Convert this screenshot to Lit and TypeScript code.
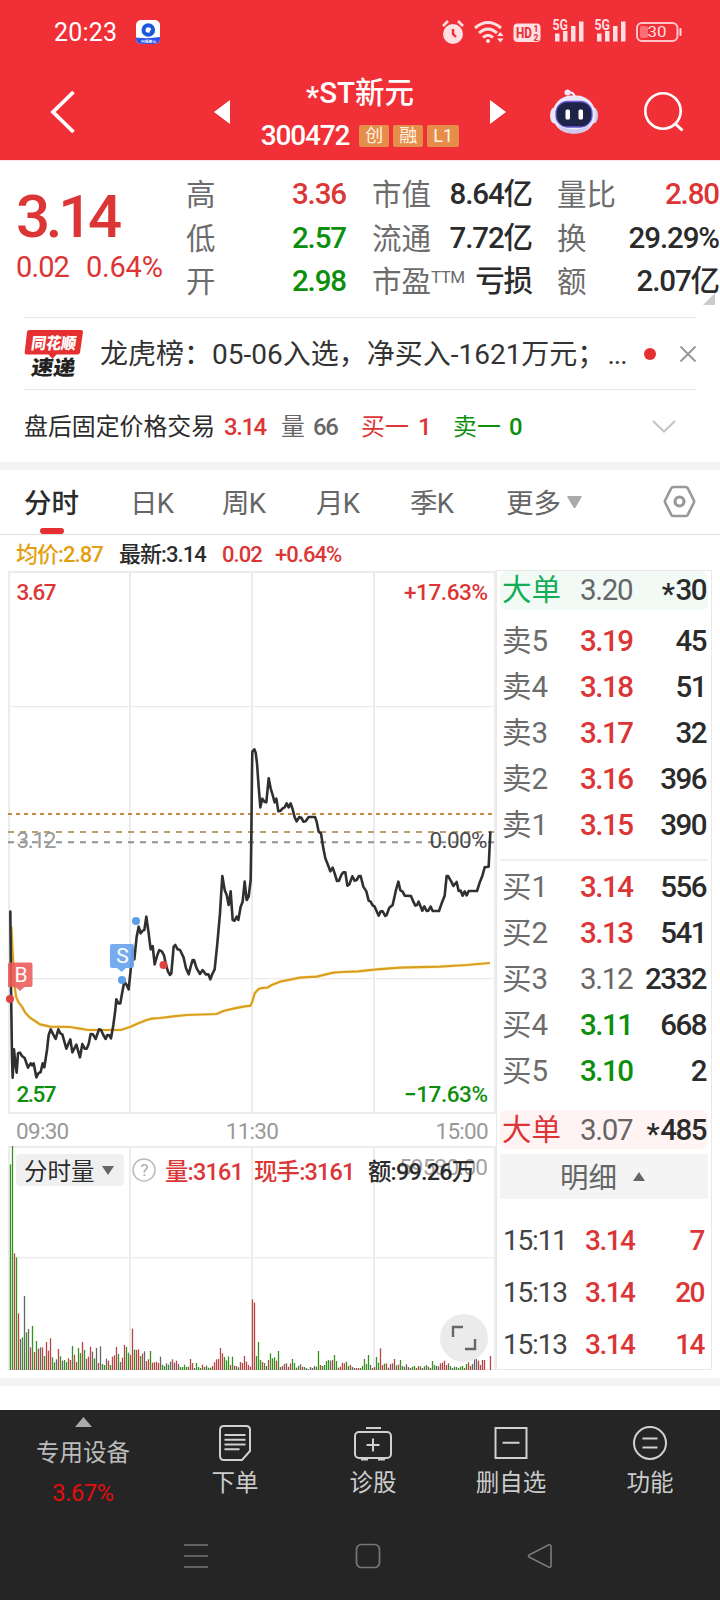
import { LitElement, html, svg, css } from "lit";
import { customElement } from "lit/decorators.js";

type Tone = "up" | "down" | "flat" | "ink";

// Minute price series, in thirds of a pixel measured from the top of the plot.
const PRICE =
  "31,575 33,800 36,1010 38,1073 42,988 46,1030 50,1058 54,1000 60,998 66,1008 74,1014 84,1043 92,1030 97,1036 101,1030 109,1072 115,1060 122,1056 128,1030 133,1042 141,990 146,945 152,928 160,944 167,957 175,928 181,940 187,943 199,986 211,958 217,997 229,974 240,1012 247,972 254,986 260,986 266,972 272,942 279,943 287,957 297,928 303,930 310,945 317,957 322,945 328,946 333,955 340,915 346,870 349,838 355,850 361,850 367,815 373,785 380,795 386,808 392,750 398,690 403,718 410,650 416,620 422,640 428,632 433,630 439,590 446,640 452,688 458,678 464,733 472,705 478,690 486,695 492,706 498,735 504,755 510,765 514,760 521,680 526,675 533,688 540,690 551,713 558,745 566,763 572,740 578,720 582,720 590,745 600,762 608,750 617,763 625,763 631,778 637,762 644,748 652,670 660,580 663,530 667,468 674,510 680,525 686,555 692,514 698,600 704,602 710,590 715,600 722,560 728,545 734,485 740,540 746,530 752,480 754,350 756,150 757,95 763,88 767,98 771,130 776,200 781,262 787,236 794,246 799,247 806,175 812,205 818,225 824,247 829,236 835,274 842,272 848,265 854,262 860,250 866,262 872,250 878,268 884,292 890,304 898,291 904,293 910,305 917,304 926,291 945,291 950,305 956,335 963,340 970,385 976,415 984,435 991,454 998,443 1004,460 1011,483 1017,482 1025,463 1030,457 1036,457 1042,497 1048,493 1057,469 1064,482 1070,480 1077,468 1082,468 1090,500 1099,514 1106,542 1112,545 1118,556 1124,560 1136,587 1142,574 1148,574 1156,588 1160,585 1168,563 1178,555 1188,510 1195,485 1201,511 1208,515 1214,527 1233,528 1240,545 1246,557 1251,555 1256,545 1267,572 1273,559 1280,573 1285,572 1292,560 1298,573 1317,573 1325,550 1334,527 1340,468 1344,468 1354,485 1360,498 1370,486 1376,513 1382,512 1388,527 1394,514 1400,526 1406,513 1431,513 1440,485 1447,468 1454,442 1466,440 1471,338";

const AVERAGE =
  "34,620 37,680 43,790 48,830 56,848 66,860 76,878 90,893 105,903 120,913 150,920 210,921 240,926 265,930 362,930 390,921 415,910 440,900 455,896 480,894 520,889 560,885 650,882 670,873 700,866 730,860 752,857 756,847 764,820 775,808 785,804 802,803 815,795 840,785 900,773 950,770 1000,758 1025,756 1075,754 1130,748 1200,743 1320,740 1400,735 1470,729";

// One token per minute: bar top (thirds of a pixel) and its colour key.
const VOLUME =
  "163g 108g 430r 442g 610r 687k 682g 558k 667g 657k 712r 648g 726r 693g 716r 712k 712r 738g 696r 722r 685r 742g 757g 748k 717r 739g 752k 750g 756g 745r 750r 708g 734r 756r 714g 729g 696r 720g 746k 740r 710r 725k 745g 714k 759r 709k 762g 765g 746k 752r 765g 740r 736r 711r 732g 756k 743r 705r 711g 728g 735r 656r 719g 720r 718r 738g 731r 724k 753r 748r 723g 758r 757r 755r 759r 740k 764g 768g 760k 764g 755k 748r 758k 752r 762k 771g 771g 764g 771g 770r 747r 759r 774k 759g 771g 774g 764r 771g 767k 773g 773g 768r 757r 748r 747r 714r 730r 741g 751g 739g 765r 740g 767k 768r 772g 756r 759r 738r 755r 765r 770r 568r 578r 738g 696g 750g 756r 759g 768k 750r 730g 745g 742g 752r 723g 771k 768r 762r 760k 770r 760r 747g 759g 773r 768g 763k 770r 771g 774k 777k 771k 774k 768k 770g 723g 765r 768g 765g 753g 750g 752k 750r 735g 753g 773r 770r 758r 760r 755g 768g 765r 771k 774k 774r 774r 774g 768g 747g 762g 735g 765k 774k 771r 741g 758g 715r 765r 761g 760r 773k 762r 760k 747r 766g 764r 750g 768k 770g 763k 771r 774k 770g 768g 774r 768r 769g 774k 769k 765g 770r 774g 753g 765g 768k 769k 760r 758r 752r 765r 760k 768g 774g 770k 771g 774g 770g 768g 774r 762g 757r 768r 762k 747k 747k 752r 765r 750r 750r 780k 780k 738r";

const VOL_COLOR: Record<string, string> = { g: "#369220", r: "#b84545", k: "#666" };

const base = css`
  :host {
    display: block;
    box-sizing: border-box;
  }
  * {
    box-sizing: border-box;
  }
  svg {
    display: block;
    flex: none;
  }
  .up {
    color: #dc3535;
  }
  .down {
    color: #0c8f0c;
  }
  .flat {
    color: #666;
  }
  .ink {
    color: #2b2b2b;
  }
`;

@customElement("status-bar")
class StatusBar extends LitElement {
  static styles = [
    base,
    css`
      :host {
        height: 64px;
        padding: 0 38px 0 54px;
        display: flex;
        align-items: center;
        color: #fff;
      }
      .clock {
        font-size: 25px;
        line-height: 30px;
        padding-top: 2px;
        letter-spacing: 0.2px;
        width: 82px;
      }
      .signals {
        margin-left: auto;
      }
    `,
  ];
  render() {
    const bars = (x: number) => svg`
      <text x="${x - 2.5}" y="14.500" font-size="14" font-weight="700" textLength="15.500" lengthAdjust="spacingAndGlyphs">5G</text>
      <rect x="${x}" y="18.500" width="4.500" height="8"/><rect x="${x + 8}" y="16" width="4.500" height="10.500"/>
      <rect x="${x + 16}" y="11" width="4.500" height="15.500"/><rect x="${x + 24}" y="6.500" width="4.500" height="20"/>`;
    return html`
      <span class="clock">20:23</span>
      <svg width="24" height="24" viewBox="0 0 24 24">
        <rect width="24" height="24" rx="5" fill="#fff" />
        <path d="M0 17.500Q12 19 24 17V19a5 5 0 0 1-5 5H5a5 5 0 0 1-5-5Z" fill="#2b51ea" />
        <circle cx="12.300" cy="10" r="4.800" fill="none" stroke="#1c57dc" stroke-width="4" />
        <circle cx="15" cy="11.500" r="1.300" fill="#1c57dc" />
        <text x="5" y="22.800" font-size="3.800" font-weight="700" fill="#fff" font-family="Noto Sans CJK SC">兴低放心</text>
      </svg>
      <svg class="signals" width="240" height="34" viewBox="0 0 240 34" fill="#ffdfe1" font-family="Roboto">
        <circle cx="11" cy="19" r="10" />
        <path d="M1 11l5-5M21 11l-5-5" stroke="#ffdfe1" stroke-width="2.600" />
        <path d="M11 14v5l3 3" stroke="#f12f37" stroke-width="2.400" fill="none" />
        <g fill="none" stroke="#ffdfe1" stroke-width="3">
          <path d="M33 13q13-11 26 0M37 18q9-8 18 0M41 22.500q5-4.500 10 0" />
        </g>
        <circle cx="46" cy="26" r="2" />
        <path d="M55 21l3.300-4 3.300 4zM55 23.500l3.300 4 3.300-4z" />
        <rect x="71.500" y="8.500" width="27" height="18.500" rx="4" />
        <text x="74" y="23.300" font-size="15.500" font-weight="800" fill="#e8323a" textLength="16" lengthAdjust="spacingAndGlyphs">HD</text>
        <text x="91.500" y="16.500" font-size="8.500" font-weight="800" fill="#e8323a">1</text>
        <text x="91.500" y="25.500" font-size="8.500" font-weight="800" fill="#e8323a">2</text>
        ${bars(113)} ${bars(155)}
        <rect x="195" y="8" width="40.500" height="18" rx="5" fill="none" stroke="#ffc5c8" stroke-width="2" />
        <rect x="198" y="11" width="8" height="12" rx="2" fill="#fb6e73" />
        <rect x="237.500" y="13" width="2" height="8" rx="1" />
        <text x="205.500" y="22.200" font-size="15" textLength="19" lengthAdjust="spacingAndGlyphs">30</text>
      </svg>
    `;
  }
}

@customElement("stock-title")
class StockTitle extends LitElement {
  static styles = [
    base,
    css`
      :host {
        height: 96px;
        display: grid;
        grid-template-columns: 214px 16px 260px 16px 44px 48px 46px 40px 36px;
        align-items: center;
        color: #fff;
      }
      .back {
        padding-left: 50px;
      }
      .name {
        display: flex;
        flex-direction: column;
        align-items: center;
        padding-top: 5px;
      }
      .title {
        font-size: 29.5px;
        line-height: 36px;
        font-weight: 500;
        height: 42px;
      }
      .star {
        position: relative;
        top: 4px;
      }
      .code {
        display: flex;
        align-items: center;
        gap: 4px;
        font-weight: 500;
        font-size: 28px;
        line-height: 36px;
      }
      .num {
        letter-spacing: -1.2px;
        margin-right: 6px;
        padding-top: 1px;
      }
      .tag {
        width: 30px;
        height: 22px;
        background: #e58e4a;
        border-radius: 2px;
        font-size: 18px;
        line-height: 22px;
        font-weight: 400;
        text-align: center;
        color: #fff3e6;
      }
      .wide {
        width: 32px;
      }
    `,
  ];
  render() {
    return html`
      <div class="back">
        <svg width="26" height="44" viewBox="0 0 26 44">
          <path d="M23.500 2L3 22l20.500 20" fill="none" stroke="#fff" stroke-width="3.800" />
        </svg>
      </div>
      <svg width="16" height="24" viewBox="0 0 16 24"><path d="M16 0v24L0 12z" fill="#fff" /></svg>
      <div class="name">
        <div class="title"><span class="star">*</span>ST新元</div>
        <div class="code">
          <span class="num">300472</span><span class="tag">创</span><span class="tag">融</span
          ><span class="tag wide">L1</span>
        </div>
      </div>
      <svg width="16" height="24" viewBox="0 0 16 24"><path d="M0 0v24l16-12z" fill="#fff" /></svg>
      <span></span>
      <svg width="48" height="46" viewBox="0 0 48 46">
        <path d="M18 3.500q6-1 7 5" fill="none" stroke="#f3e9ff" stroke-width="2.200" />
        <circle cx="17.500" cy="3.500" r="3" fill="#f3e4fb" />
        <ellipse cx="4.500" cy="26.500" rx="4.500" ry="8" fill="#e6e4fb" />
        <ellipse cx="43.500" cy="26.500" rx="4.500" ry="8" fill="#cfcff2" />
        <rect x="2.500" y="6.500" width="43" height="38" rx="19" fill="#ebe7fc" />
        <path d="M7 36q17 9 34 0q-6 8.500-17 8.500T7 36z" fill="#cdc8f0" />
        <rect x="6" y="12.500" width="36" height="25.500" rx="11.500" fill="#1d2447" stroke="#6a5bd8" stroke-width="1.300" />
        <rect x="15.500" y="20.500" width="4.500" height="10" rx="1.500" fill="#fff" />
        <rect x="28.500" y="20.500" width="4.500" height="10" rx="1.500" fill="#fff" />
      </svg>
      <span></span>
      <svg width="40" height="42" viewBox="0 0 40 42">
        <circle cx="19" cy="20" r="17.700" fill="none" stroke="#fff" stroke-width="2.600" />
        <path d="M31 32.500l7.500 7" stroke="#fff" stroke-width="3" />
      </svg>
    `;
  }
}

@customElement("quote-summary")
class QuoteSummary extends LitElement {
  static styles = [
    base,
    css`
      :host {
        height: 157px;
        position: relative;
        display: grid;
        grid-template-columns: 170px 160px 26px 160px 25px 163px;
        padding-left: 16px;
        border-top: 1px solid #ffe3e6;
      }
      .price {
        font-size: 60px;
        line-height: 64px;
        font-weight: 500;
        letter-spacing: -4.3px;
        padding-top: 24px;
      }
      .delta {
        display: flex;
        gap: 17px;
        font-size: 29px;
        line-height: 37px;
        letter-spacing: -0.9px;
      }
      .pct {
        letter-spacing: -0.2px;
      }
      .col {
        padding-top: 12px;
      }
      .cell {
        display: flex;
        justify-content: space-between;
        height: 43.5px;
        line-height: 43.5px;
        font-size: 29.5px;
      }
      .label {
        color: #6c6c6c;
        position: relative;
        top: 1px;
      }
      .value {
        font-weight: 500;
        letter-spacing: -1.1px;
      }
      .last .value {
        margin-right: 1px;
      }
      .sup {
        font-size: 17px;
        position: relative;
        top: -9px;
        letter-spacing: -0.6px;
      }
      .corner {
        position: absolute;
        right: 5px;
        bottom: 12px;
      }
    `,
  ];
  render() {
    const cols: [string, string, Tone, string?][][] = [
      [["高", "3.36", "up"], ["低", "2.57", "down"], ["开", "2.98", "down"]],
      [["市值", "8.64亿", "ink"], ["流通", "7.72亿", "ink"], ["市盈", "亏损", "ink", "TTM"]],
      [["量比", "2.80", "up"], ["换", "29.29%", "ink"], ["额", "2.07亿", "ink"]],
    ];
    return html`
      <div>
        <div class="price up">3.14</div>
        <div class="delta up"><span>0.02</span><span class="pct">0.64%</span></div>
      </div>
      ${cols.map(
        (col, i) => html`
          <div class="col ${i === 2 ? "last" : ""}">
            ${col.map(
              ([l, v, tone, sup]) => html`<div class="cell">
                <span class="label">${l}${sup ? html`<span class="sup">${sup}</span>` : ""}</span>
                <span class="value ${tone}">${v}</span>
              </div>`
            )}
          </div>
          ${i < 2 ? html`<span></span>` : ""}
        `
      )}
      <svg class="corner" width="12" height="12" viewBox="0 0 12 12"><path d="M12 0v12H0z" fill="#ccc" /></svg>
    `;
  }
}

@customElement("news-strip")
class NewsStrip extends LitElement {
  static styles = [
    base,
    css`
      :host {
        padding: 0 24px;
      }
      .msg {
        height: 73px;
        border-top: 1px solid #e8e8e8;
        border-bottom: 1px solid #e8e8e8;
        display: flex;
        align-items: center;
      }
      .text {
        font-size: 28px;
        line-height: 40px;
        color: #333;
        margin-left: 16px;
        width: 544px;
        padding-top: 2px;
        white-space: nowrap;
      }
      .dots {
        letter-spacing: -1px;
        margin-left: 2px;
      }
      .close {
        margin-left: auto;
      }
      .after {
        height: 72px;
        display: flex;
        align-items: center;
        font-size: 23.9px;
        line-height: 32px;
        padding-top: 2px;
      }
      .after .n {
        letter-spacing: -1.4px;
        font-weight: 500;
      }
    `,
  ];
  render() {
    return html`
      <div class="msg">
        <svg width="60" height="50" viewBox="0 0 60 50" font-family="Noto Sans CJK SC" font-weight="900">
          <path d="M5.500 1H57q2 0 2 2l-3 20.500q-.5 2-2.500 2H32.500L28.500 30l-4-4.500H3q-2.500 0-2.300-2.200L3 3q.4-2 2.500-2z" fill="#e52f30" />
          <text transform="translate(6.500 19.500) skewX(-8)" font-size="16" fill="#fff" textLength="45" lengthAdjust="spacingAndGlyphs">同花顺</text>
          <text transform="translate(6.500 46) skewX(-8)" font-size="20.500" fill="#222" textLength="44" lengthAdjust="spacingAndGlyphs">速递</text>
        </svg>
        <span class="text">龙虎榜：05-06入选，净买入-1621万元；<span class="dots">...</span></span>
        <svg width="12" height="12"><circle cx="6" cy="6" r="6" fill="#e52f30" /></svg>
        <svg class="close" width="16" height="16" viewBox="0 0 16 16">
          <path d="M.5.5l15 15M15.500.5l-15 15" stroke="#999" stroke-width="2" />
        </svg>
      </div>
      <div class="after">
        <span class="ink" style="width:200px">盘后固定价格交易</span>
        <span class="n up" style="width:57px">3.14</span>
        <span class="flat" style="width:32px">量</span>
        <span class="n flat" style="width:48px">66</span>
        <span class="up" style="width:57px">买一</span>
        <span class="n up" style="width:35px">1</span>
        <span class="down" style="width:56px">卖一</span>
        <span class="n down">0</span>
        <svg style="margin-left:auto;margin-right:20px" width="24" height="14" viewBox="0 0 24 14">
          <path d="M1 1l11 10.500L23 1" fill="none" stroke="#c4c4c4" stroke-width="2.200" />
        </svg>
      </div>
    `;
  }
}

@customElement("period-tabs")
class PeriodTabs extends LitElement {
  static styles = [
    base,
    css`
      :host {
        height: 73px;
        border-top: 8px solid #f4f4f4;
        border-bottom: 1px solid #e0e0e0;
        padding: 0 24px;
        display: flex;
        font-size: 27.5px;
        line-height: 68px;
        color: #666;
      }
      .tab {
        flex: none;
      }
      .k {
        letter-spacing: -0.8px;
      }
      .on {
        color: #2b2b2b;
        font-weight: 500;
        display: flex;
        flex-direction: column;
      }
      .on::after {
        content: "";
        width: 24px;
        height: 6px;
        border-radius: 3px;
        background: #e52f30;
        margin: -10px 0 0 16px;
      }
      .tri {
        margin-top: 26px;
      }
      .gear {
        margin: 15px 0 0 auto;
      }
    `,
  ];
  render() {
    const tabs: [string, number][] = [["日K", 92], ["周K", 94], ["月K", 94], ["季K", 96]];
    return html`
      <span class="tab on" style="width:106px">分时</span>
      ${tabs.map(([t, w]) => html`<span class="tab k" style="width:${w}px">${t}</span>`)}
      <span class="tab" style="width:61px">更多</span>
      <svg class="tri" width="15" height="12" viewBox="0 0 15 12"><path d="M1 0h13q1 0 .5 1.200L8.500 11.500q-1 1-2 0L.5 1.200Q0 0 1 0z" fill="#aaa" /></svg>
      <svg class="gear" width="33" height="33" viewBox="0 0 33 33" fill="none" stroke="#999" stroke-width="2.600">
        <path d="M10.500 2h12q1.500 0 2.200 1.200l6 11.800q.8 1.500 0 3l-6 11.800q-.7 1.200-2.200 1.200h-12q-1.500 0-2.200-1.200l-6-11.800q-.8-1.500 0-3l6-11.800Q9 2 10.500 2z" />
        <circle cx="16.500" cy="16.500" r="4.500" stroke-width="3.200" />
      </svg>
    `;
  }
}

@customElement("minute-chart")
class MinuteChart extends LitElement {
  static styles = [
    base,
    css`
      :host {
        width: 496px;
      }
      .info {
        display: flex;
        height: 36px;
        padding-left: 16px;
        line-height: 40px;
        font-size: 22px;
        font-weight: 500;
        letter-spacing: -0.95px;
      }
      .info span {
        flex: none;
      }
      .avg {
        color: #e2a010;
      }
      .axis {
        display: flex;
        justify-content: space-between;
        height: 32px;
        padding: 0 8px 0 16px;
        line-height: 34px;
        font-size: 22.500px;
        color: #999;
        letter-spacing: -0.7px;
      }
      .vol {
        position: relative;
      }
      .head {
        position: absolute;
        left: 16px;
        top: 8px;
        height: 32px;
        display: flex;
        align-items: center;
        font-size: 23.4px;
        line-height: 32px;
        font-weight: 500;
        letter-spacing: -0.8px;
        white-space: nowrap;
      }
      .head .t {
        padding-top: 3px;
      }
      .pill {
        width: 108px;
        height: 32px;
        border-radius: 4px;
        background: #f0f0f0;
        display: flex;
        align-items: center;
        justify-content: space-between;
        padding: 0 10px 0 8px;
        margin-right: 8px;
        letter-spacing: 0;
        font-size: 23.500px;
        font-weight: 400;
      }
      .q {
        margin-right: 9px;
      }
      .expand {
        position: absolute;
        left: 440px;
        top: 168px;
      }
    `,
  ];
  render() {
    const grid = (top: number, rows: number[], bottom: number) => svg`
      <g fill="#ececec">
        ${[8, 129, 251, 373, 494].map((x) => svg`<rect x="${x}" y="${top}" width="2" height="${bottom - top}"/>`)}
        ${[top, ...rows, bottom - 2].map((y) => svg`<rect x="8" y="${y}" width="488" height="${y === top || y === bottom - 2 ? 2 : 1.300}"/>`)}
      </g>`;
    return html`
      <div class="info">
        <span class="avg" style="width:103px">均价:2.87</span>
        <span class="ink" style="width:103px">最新:3.14</span>
        <span class="up" style="width:53px">0.02</span>
        <span class="up">+0.64%</span>
      </div>
      <svg width="496" height="543" viewBox="0 571 496 543" font-family="Roboto" font-size="22.500">
        ${grid(571, [706, 978], 1114)}
        <g fill="none" transform="translate(0 720) scale(.33333)">
          <path d="M24 282H1482" stroke="#c58a45" stroke-width="6" stroke-dasharray="12 12" />
          <path d="M24 336H1482" stroke="#b8a070" stroke-width="6" stroke-dasharray="18 18" />
          <path d="M24 367H1482" stroke="#919191" stroke-width="6" stroke-dasharray="18 18" />
          <polyline points=${AVERAGE} stroke="#fff3cf" stroke-width="11" stroke-linejoin="round" />
          <polyline points=${AVERAGE} stroke="#d99e20" stroke-width="6.500" stroke-linejoin="round" />
        </g>
        <text x="16.500" y="848" fill="#999" textLength="40">3.12</text>
        <text x="429.500" y="848" fill="#4a4a4a" textLength="58">0.00%</text>
        <g fill="none" transform="translate(0 720) scale(.33333)">
          <polyline points=${PRICE} stroke="#303030" stroke-width="7.800" stroke-linejoin="round" stroke-linecap="round" />
        </g>
        <g font-weight="500">
          <text x="16.500" y="599.500" fill="#dc3535" textLength="40">3.67</text>
          <text x="404" y="599.500" fill="#dc3535" textLength="84">+17.63%</text>
          <text x="16.500" y="1101.500" fill="#0c8f0c" textLength="40">2.57</text>
          <text x="404" y="1101.500" fill="#0c8f0c" textLength="84">−17.63%</text>
        </g>
        <path d="M10 962.500h20.500q2 0 2 2v20.500q0 2-2 2h-6L20 991l-4.500-4h-7.500v-22.500q0-2 2-2z" fill="#ec5a5a" opacity=".88" />
        <path d="M112 944h20q2 0 2 2v20q0 2-2 2h-6l-4.500 4-4.500-4h-5q-2 0-2-2v-20q0-2 2-2z" fill="#6aa5ee" opacity=".92" />
        <g fill="#fff" font-size="21" text-anchor="middle">
          <text x="21" y="982">B</text>
          <text x="122.500" y="963">S</text>
        </g>
        <circle cx="10" cy="999" r="4" fill="#e04242" />
        <circle cx="163.500" cy="965" r="4" fill="#e04242" />
        <circle cx="122" cy="980" r="4" fill="#5a9fe8" />
        <circle cx="136" cy="921" r="4" fill="#5a9fe8" />
      </svg>
      <div class="axis"><span>09:30</span><span>11:30</span><span>15:00</span></div>
      <div class="vol">
        <svg width="496" height="224" viewBox="0 1146 496 224" font-family="Roboto" font-size="22.500">
          ${grid(1146, [1257], 1371)}
          <text x="399" y="1175" fill="#a3a3a3" textLength="89">59530.00</text>
          ${VOLUME.split(" ").map((t, i) => {
            const top = 1110 + parseInt(t) / 3;
            return svg`<rect x="${9.85 + i * 2}" y="${top}" width="1.300" height="${1370 - top}" fill="${VOL_COLOR[t.slice(-1)]}"/>`;
          })}
        </svg>
        <div class="head">
          <span class="pill ink"><span class="t">分时量</span><svg width="12" height="9" viewBox="0 0 12 9"><path d="M0 0h12L6 9z" fill="#666" /></svg></span>
          <svg class="q" width="24" height="24" viewBox="0 0 24 24">
            <circle cx="12" cy="12" r="11" fill="none" stroke="#bbb" stroke-width="1.500" />
            <text x="12" y="18" text-anchor="middle" font-size="17" font-weight="400" fill="#aaa">?</text>
          </svg>
          <span class="t up" style="width:89px">量:3161</span>
          <span class="t up" style="width:114px">现手:3161</span>
          <span class="t ink">额:99.26万</span>
        </div>
        <svg class="expand" width="48" height="48" viewBox="0 0 48 48">
          <circle cx="24" cy="24" r="24" fill="#ebebeb" />
          <path d="M13 23V13h10M35 25v10H25" fill="none" stroke="#666" stroke-width="2.400" />
        </svg>
      </div>
    `;
  }
}

@customElement("order-book")
class OrderBook extends LitElement {
  static styles = [
    base,
    css`
      :host {
        width: 216px;
        height: 800px;
        margin-top: 35px;
        padding: 0 3px;
        border: 1px solid #e8e8e8;
      }
      .row {
        display: grid;
        grid-template-columns: 78px 60px 1fr;
        padding: 0 2px;
        height: 46px;
        line-height: 46px;
        font-size: 29.500px;
      }
      .big {
        height: 39px;
        line-height: 39px;
        border-radius: 7px;
      }
      .sell {
        background: #f2faf6;
        margin-bottom: 8px;
      }
      .buy {
        background: #fff3f3;
        line-height: 41px;
        margin-top: 16px;
      }
      .green {
        color: #12ad56;
      }
      .row .label.flat {
        color: #6c6c6c;
      }
      .num {
        font-weight: 500;
        letter-spacing: -1.500px;
      }
      .row .num.flat {
        font-weight: 400;
        letter-spacing: -1.300px;
      }
      .qty {
        text-align: right;
      }
      .star {
        position: relative;
        top: 4px;
        margin-right: 2px;
      }
      .rule {
        height: 2px;
        background: #f0f0f0;
        margin: 11px 0 3px;
      }
      .detail {
        height: 45px;
        margin-top: 5px;
        background: #f4f4f4;
        color: #666;
        display: flex;
        align-items: center;
        gap: 16px;
        padding-left: 60px;
        font-size: 28.500px;
        line-height: 41px;
      }
      .detail span {
        padding-top: 4px;
      }
      .ticks {
        padding-top: 16px;
      }
      .tick {
        display: grid;
        grid-template-columns: 82px 60px 1fr;
        padding: 0 4px 0 3px;
        height: 52px;
        line-height: 52px;
        font-size: 28px;
      }
      .time {
        color: #444;
        letter-spacing: -1.200px;
      }
    `,
  ];
  render() {
    const row = ([l, p, q, tone]: [string, string, string, Tone]) => html`<div class="row">
      <span class="label flat">${l}</span><span class="num ${tone}">${p}</span><span class="num qty ink">${q}</span>
    </div>`;
    const sells: [string, string, string, Tone][] = [
      ["卖5", "3.19", "45", "up"],
      ["卖4", "3.18", "51", "up"],
      ["卖3", "3.17", "32", "up"],
      ["卖2", "3.16", "396", "up"],
      ["卖1", "3.15", "390", "up"],
    ];
    const buys: [string, string, string, Tone][] = [
      ["买1", "3.14", "556", "up"],
      ["买2", "3.13", "541", "up"],
      ["买3", "3.12", "2332", "flat"],
      ["买4", "3.11", "668", "down"],
      ["买5", "3.10", "2", "down"],
    ];
    const ticks = [["15:11", "3.14", "7"], ["15:13", "3.14", "20"], ["15:13", "3.14", "14"]];
    return html`
      <div class="row big sell">
        <span class="label green">大单</span><span class="num flat">3.20</span
        ><span class="num qty ink"><span class="star">*</span>30</span>
      </div>
      ${sells.map(row)}
      <div class="rule"></div>
      ${buys.map(row)}
      <div class="row big buy">
        <span class="label up">大单</span><span class="num flat">3.07</span
        ><span class="num qty ink"><span class="star">*</span>485</span>
      </div>
      <div class="detail">
        <span>明细</span><svg width="12" height="9" viewBox="0 0 12 9"><path d="M6 0l6 9H0z" fill="#666" /></svg>
      </div>
      <div class="ticks">
        ${ticks.map(
          ([t, p, q]) => html`<div class="tick">
            <span class="time">${t}</span><span class="num up">${p}</span><span class="num qty up">${q}</span>
          </div>`
        )}
      </div>
    `;
  }
}

@customElement("bottom-bar")
class BottomBar extends LitElement {
  static styles = [
    base,
    css`
      :host {
        height: 190px;
        background: #252525;
        color: #ccc;
        font-size: 23.500px;
      }
      .items {
        display: grid;
        grid-template-columns: 166px 138px 138px 138px 140px;
        height: 114px;
      }
      .item {
        display: flex;
        flex-direction: column;
        align-items: center;
        padding-top: 14px;
        line-height: 32px;
        gap: 5px;
      }
      .sector {
        padding-top: 7px;
        gap: 0;
      }
      .sector .nm {
        margin-top: 10px;
        color: #bbb;
      }
      .pct {
        margin-top: 8px;
        color: #e20d0d;
        font-size: 23.500px;
        letter-spacing: -0.3px;
      }
      .nav {
        display: flex;
        justify-content: space-between;
        padding: 19px 167px 0 183px;
      }
    `,
  ];
  render() {
    const icon = (body: unknown) =>
      html`<svg width="40" height="38" viewBox="0 0 40 38" fill="none" stroke="#d0d0d0" stroke-width="2">${body}</svg>`;
    return html`
      <div class="items">
        <div class="item sector">
          <svg width="17" height="10" viewBox="0 0 17 10"><path d="M8.500 0L17 10H0z" fill="#aaa" /></svg>
          <span class="nm">专用设备</span><span class="pct">3.67%</span>
        </div>
        <div class="item">
          ${icon(svg`<path d="M9 2h22q4 0 4 4v21l-8 9H9q-4 0-4-4V6q0-4 4-4zM9.500 11h21M9.500 15.700h21M9.500 20.500h21M9.500 25.300h15"/>`)}
          <span>下单</span>
        </div>
        <div class="item">
          ${icon(svg`<rect x="2" y="8" width="36" height="26" rx="4"/><path d="M13 4h15M8 35.500h7M25 35.500h7M20 14.500v13M13.500 21h13"/>`)}
          <span>诊股</span>
        </div>
        <div class="item">
          ${icon(svg`<path d="M4.500 4h31v30h-31zM11.500 18.700h17"/>`)}
          <span>删自选</span>
        </div>
        <div class="item">
          ${icon(svg`<circle cx="20" cy="19" r="16"/><path d="M12.500 14.500h15M12.500 23.500h15"/>`)}
          <span>功能</span>
        </div>
      </div>
      <div class="nav">
        <svg width="26" height="26" viewBox="0 0 26 26" stroke="#777" stroke-width="1.700"><path d="M1 2h24M1 13h24M1 24h24" /></svg>
        <svg width="26" height="26" viewBox="0 0 26 26" stroke="#777" stroke-width="1.700" fill="none"><rect x="1.500" y="1.500" width="23" height="23" rx="5" /></svg>
        <svg width="26" height="26" viewBox="0 0 26 26" stroke="#777" stroke-width="1.700" fill="none" stroke-linejoin="round"><path d="M2.500 11.800L21.500 2q2.500-1 2.500 1.500v19q0 2.500-2.500 1.500L2.500 14.200q-2-1.200 0-2.400z" /></svg>
      </div>
    `;
  }
}

@customElement("app-root")
class AppRoot extends LitElement {
  static styles = [
    base,
    css`
      :host {
        display: block;
        width: 720px;
        height: 1600px;
        overflow: hidden;
        background: #fff;
        font-family: Roboto, "Noto Sans CJK SC", sans-serif;
      }
      .top {
        background: #f12f37;
        height: 160px;
      }
      .main {
        display: flex;
        height: 835px;
      }
      .gap {
        height: 40px;
        padding-top: 8px;
      }
      .gap::before {
        content: "";
        display: block;
        height: 8px;
        background: #f4f4f4;
      }
    `,
  ];
  render() {
    return html`
      <div class="top"><status-bar></status-bar><stock-title></stock-title></div>
      <quote-summary></quote-summary>
      <news-strip></news-strip>
      <period-tabs></period-tabs>
      <div class="main"><minute-chart></minute-chart><order-book></order-book></div>
      <div class="gap"></div>
      <bottom-bar></bottom-bar>
    `;
  }
}
